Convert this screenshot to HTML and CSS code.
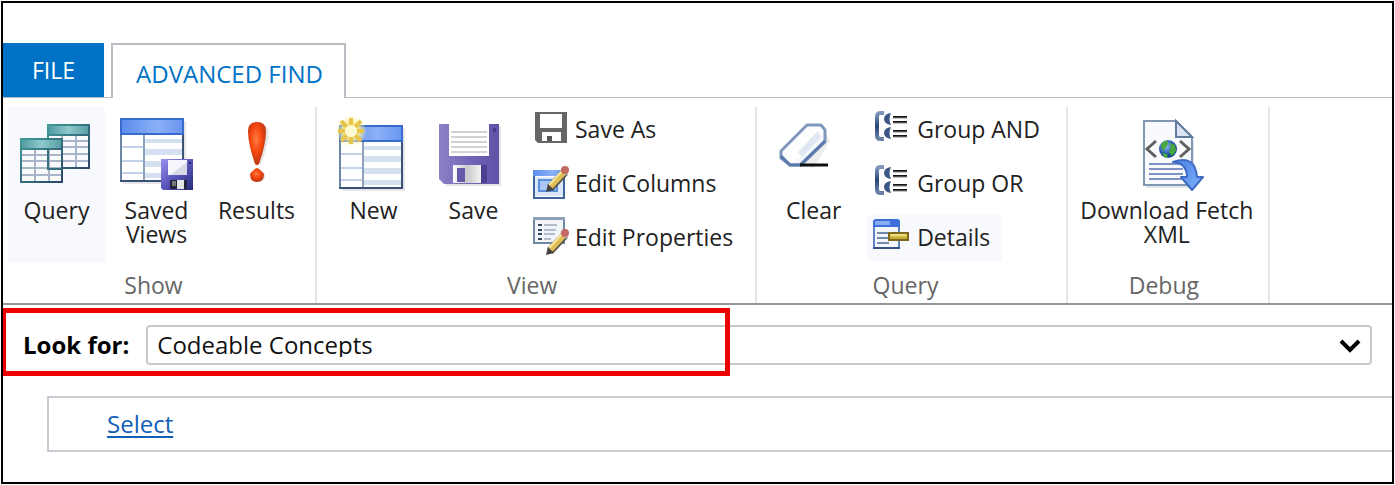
FILE: index.html
```html
<!DOCTYPE html>
<html lang="en">
<head>
<meta charset="utf-8">
<title>Advanced Find</title>
<link rel="stylesheet" href="styles.css">
</head>
<body>
<svg class="defs" aria-hidden="true">
  <defs>
    <linearGradient id="teal" x1="0" x2="1"><stop offset="0" stop-color="#4f9a9f"/><stop offset=".5" stop-color="#8fc9cb"/><stop offset="1" stop-color="#569da4"/></linearGradient>
    <linearGradient id="blue" x1="0" x2="1"><stop offset="0" stop-color="#5a8cee"/><stop offset=".6" stop-color="#8cb0f7"/><stop offset="1" stop-color="#6895f0"/></linearGradient>
    <linearGradient id="edge" x1="0" y1="0" x2="1" y2="1"><stop offset="0" stop-color="#3f9a98"/><stop offset="1" stop-color="#2c4668"/></linearGradient>
    <linearGradient id="violet" x1="0" x2="1" y2="1"><stop offset="0" stop-color="#9a92f0"/><stop offset=".5" stop-color="#5a55bb"/><stop offset="1" stop-color="#252b78"/></linearGradient>
    <linearGradient id="purple" x1="0" x2="1"><stop offset="0" stop-color="#8c80c6"/><stop offset=".5" stop-color="#7565b8"/><stop offset="1" stop-color="#6151a6"/></linearGradient>
    <radialGradient id="red" cx=".45" cy=".4"><stop offset="0" stop-color="#ff7a45"/><stop offset=".6" stop-color="#f5480f"/><stop offset="1" stop-color="#c93a12"/></radialGradient>
    <linearGradient id="metal" x1="0" x2="1"><stop offset="0" stop-color="#fff"/><stop offset=".5" stop-color="#c9c9cd"/><stop offset="1" stop-color="#f2f2f2"/></linearGradient>
    <linearGradient id="rubber" x1="0" y1="0" x2="1" y2="1"><stop offset="0" stop-color="#f4f7fb"/><stop offset=".55" stop-color="#fff"/><stop offset="1" stop-color="#cfdcf0"/></linearGradient>
    <linearGradient id="slate" x1="0" y1="0" x2="0" y2="1"><stop offset="0" stop-color="#8099bd"/><stop offset=".5" stop-color="#2c4674"/><stop offset="1" stop-color="#6c83aa"/></linearGradient>
    <linearGradient id="gold" x1="0" y1="0" x2="0" y2="1"><stop offset="0" stop-color="#f2df72"/><stop offset="1" stop-color="#b79a1c"/></linearGradient>
    <linearGradient id="arrow" x1="0" x2="1" y2="1"><stop offset="0" stop-color="#4c7fe0"/><stop offset="1" stop-color="#7fb0ff"/></linearGradient>
    <radialGradient id="ocean" cx=".4" cy=".35"><stop offset="0" stop-color="#8dbdf2"/><stop offset="1" stop-color="#174a9c"/></radialGradient>
    <radialGradient id="glow"><stop offset="0" stop-color="#fffde0"/><stop offset=".5" stop-color="#fbec85" stop-opacity=".9"/><stop offset="1" stop-color="#fff6b0" stop-opacity="0"/></radialGradient>
    <g id="sheet">
      <path fill="#e6e6ea" d="M3 3h63v63H3z"/>
      <path fill="#fff" d="M1 1h62v62H1z"/>
      <path fill="#d5e0f1" d="M25 21h37v4H25zM25 31h37v6H25zM25 43h37v6H25zM25 55h37v5H25z"/>
      <path stroke="#c3d2e8" stroke-width="2" d="M2 29h22M2 43h22M2 55h22"/>
      <path stroke="#8ea2bd" stroke-width="2" d="M24 17v46"/>
      <path fill="url(#blue)" d="M1 1h62v15H1z"/>
      <path fill="none" stroke="#6e86a6" stroke-width="2" d="M1 16v47"/>
      <path fill="none" stroke="#3b5274" stroke-width="2" d="M0 63h63V16"/>
      <path fill="none" stroke="#386bce" stroke-width="2" d="M1 16V1h62v15z"/>
    </g>
    <g id="grid">
      <path fill="#f8fafc" d="M1 1h41v43H1z"/>
      <path stroke="#a9b5c8" stroke-width="2" d="M2 17h40M2 23h40M2 30h40M2 37h40M15 12v32M29 12v32"/>
      <path fill="url(#teal)" d="M1 1h41v10H1z"/>
      <path fill="none" stroke="url(#edge)" stroke-width="2" d="M1 1h41v43H1zM1 11h41"/>
    </g>
    <g id="pencil">
      <path stroke="#57544c" stroke-width="8" d="M4 23 19 7"/>
      <path stroke="#dfbf55" stroke-width="6" d="M4 22 19 6"/>
      <path stroke="#f6e79c" stroke-width="2" d="M3 20 17 5"/>
      <path fill="#444" d="m0 27 2-8 6 6z"/>
      <path stroke="#b8bcc4" stroke-width="8" d="m17 8 2-2"/>
      <path stroke="#c46b61" stroke-width="8" stroke-linecap="round" d="m19 5 0 0"/>
    </g>
    <g id="brackets">
      <path fill="none" stroke="url(#slate)" stroke-width="4" d="M12 4H8Q5 4 5 8v18q0 4 3 4h4"/>
      <path fill="#3c5685" d="M19 4q-7 1-7 6t7 6q-3-6 0-12zM19 18q-7 1-7 6t7 6q-3-6 0-12z"/>
      <path stroke="#151515" stroke-width="2" d="M21 8h14M21 13h14M21 22h14M21 27h14"/>
      <path stroke="#8a8a8a" d="M21 9h14M21 14h14M21 23h14M21 28h14"/>
    </g>
  </defs>
</svg>

<header class="tabs">
  <button class="tab tab-file" type="button">FILE</button>
  <button class="tab tab-current" type="button">ADVANCED FIND</button>
</header>

<div class="ribbon">
  <section class="group group-show">
    <div class="tools">
      <button class="large selected" type="button">
        <svg viewBox="0 0 80 80"><use href="#grid" x="30" y="9"/><use href="#grid" x="3" y="23"/><path fill="none" stroke="#35717c" stroke-width="2" d="M31 33v21h14"/></svg>
        Query</button>
      <button class="large" type="button">
        <svg viewBox="0 0 80 80"><use href="#sheet" x="3" y="3"/>
          <path fill="url(#violet)" d="M44 44h32v31H46l-2-2z"/><path fill="#f6f6fc" d="M51 45h19v15H51z"/><path fill="#d7d9e6" d="m70 47-17 13h17z"/><path fill="#23233c" d="M53 65h17v9H53z"/><path fill="#e5e5e5" d="M60 65h7v9h-7z"/><path fill="#777" d="M55 66h4v5h-4z"/><path fill="#25226b" d="M72 47h2v2h-2z"/></svg>
        Saved Views</button>
      <button class="large" type="button">
        <svg viewBox="0 0 80 80"><path fill="#e4e4e4" d="M32 11q10-7 19 2 3 9-7 36h-4z"/><path fill="url(#red)" d="M31 16q0-9 9-9t9 9q0 13-7 33-2 2-4 0-7-20-7-33z"/><ellipse cx="41" cy="61" rx="7" ry="6" fill="#ddd"/><path fill="url(#red)" d="M40 53q2 0 7 6 0 8-7 8t-7-8q5-6 7-6z"/></svg>
        Results</button>
    </div>
    <h2 class="caption">Show</h2>
  </section>

  <section class="group">
    <div class="tools">
      <button class="large" type="button">
        <svg viewBox="0 0 80 80"><use href="#sheet" x="5" y="10"/><circle cx="17" cy="16" r="16" fill="url(#glow)"/><path stroke="#e8c54a" stroke-width="4" d="M17 3v7M17 22v7M4 16h7M23 16h7M7 6l6 6M27 6l-6 6M7 26l6-6M27 26l-6-6"/><circle cx="17" cy="16" r="6" fill="#fffbd0"/></svg>
        New</button>
      <button class="large" type="button">
        <svg viewBox="0 0 80 80"><path fill="#e4e3e9" d="M9 11h58v60H12z"/><path fill="url(#purple)" d="M5 9h60v60H10l-5-5z"/><path fill="#fff" d="M15 9h40v32H15z"/><path stroke="#d2d2d6" stroke-width="2" d="M17 17h36M17 22h36M17 27h36M17 32h36M17 37h36"/><path fill="#4d3f91" d="M19 50h34v18H19z"/><path fill="url(#metal)" d="M19 50h28v18H19z"/><path fill="#6757a9" d="M23 53h8v14h-8z"/><path fill="#493c87" d="M59 13h3v4h-3z"/></svg>
        Save</button>
      <div class="stack">
        <button class="small" type="button">
          <svg viewBox="0 0 40 40"><path fill="#666" d="M5 3h32v31H8l-3-3z"/><path fill="#fff" d="M10 5h22v14H10zM12 23h19v9H12z"/><path fill="#555" d="M17 27h5v5h-5z"/></svg>
          Save As</button>
        <button class="small" type="button">
          <svg viewBox="0 0 40 40"><path fill="#fff" stroke="#3e659e" stroke-width="2" d="M4 8h30v27H4z"/><path fill="url(#blue)" d="M3 7h32v6H3z"/><path fill="#dbe8fb" d="M5 14h28v19H5z"/><path fill="#aac8f5" stroke="#5b8edb" stroke-width="2" d="M9 17h18v11H9z"/><use href="#pencil" x="16" y="2"/></svg>
          Edit Columns</button>
        <button class="small" type="button">
          <svg viewBox="0 0 40 40"><path fill="#f1f5fa" stroke="#7288a4" stroke-width="2" d="M4 1h30v25H4z"/><path fill="#8da0b9" d="M3 0h32v3H3z"/><path stroke="#33445d" stroke-width="2" d="M8 8h4M8 13h4M8 17h4M8 22h4"/><path stroke="#b2bdcc" stroke-width="2" d="M14 8h13M14 13h12M14 17h11M14 22h7"/><use href="#pencil" x="16" y="11"/></svg>
          Edit Properties</button>
      </div>
    </div>
    <h2 class="caption">View</h2>
  </section>

  <section class="group group-query">
    <div class="tools">
      <button class="large" type="button">
        <svg viewBox="0 0 80 80"><path fill="#eceef0" d="m20 51 20 2 16-27-5-10z"/><path fill="url(#rubber)" stroke="#7e98bd" stroke-width="3" stroke-linejoin="round" d="M7 36 33 10h14l4 5v12L27 50H16l-9-7z"/><path fill="#dfe7f3" d="m24 37 20-21 3 6-19 20z"/><path fill="none" stroke="#597aaa" stroke-width="3" d="m7 41 9 9h10l25-24"/><path stroke="#111" stroke-width="3" d="M26 50h28"/></svg>
        Clear</button>
      <div class="stack">
        <button class="small" type="button"><svg viewBox="0 0 40 40"><use href="#brackets"/></svg>
          Group AND</button>
        <button class="small" type="button"><svg viewBox="0 0 40 40"><use href="#brackets"/></svg>
          Group OR</button>
        <button class="small selected" type="button">
          <svg viewBox="0 0 40 40"><path fill="#f2f6fd" stroke="#6084c0" stroke-width="2" d="M2 5h25v26H2z"/><path fill="#3d70d8" d="M1 10V5q0-3 3-3h21q3 0 3 3v5z"/><path fill="#87adf8" d="M3 4h15v4H3z"/><path stroke="#7388ab" stroke-width="2" d="M5 16h12M5 21h12M5 26h12"/><path stroke="#355383" stroke-width="2" d="M1 31h27"/><path fill="url(#gold)" stroke="#7c691e" stroke-width="2" d="M17 16h19v7H17z"/><path stroke="#fff3a5" d="M19 18h15"/></svg>
          Details</button>
      </div>
    </div>
    <h2 class="caption">Query</h2>
  </section>

  <section class="group">
    <div class="tools">
      <button class="large wide" type="button">
        <svg viewBox="0 0 80 80"><path fill="#e4e5e9" d="M19 9h32l16 17v47H19z"/><path fill="#f8fafd" stroke="#8096b4" stroke-width="2" d="M17 6h32l16 16v48H17z"/><path fill="#dce6f3" stroke="#627c9e" stroke-width="2" d="M49 6v16h16z"/><path fill="none" stroke="#606060" stroke-width="3" d="m29 26-9 8 9 8M53 26l9 8-9 8"/><circle cx="41" cy="34" r="9" fill="url(#ocean)"/><path fill="#48a83b" d="M34 30q3-5 7-4l-1 5-4 5zM43 28l5 2 1 6-4 5-3-4 2-4zM35 38l5 1 1 4q-4 0-6-5z"/><path stroke="#8094c5" stroke-width="2" d="M22 49h34M22 54h34M22 59h34M22 64h34"/><path fill="url(#arrow)" stroke="#3e6cc4" stroke-width="2" stroke-linejoin="round" d="M46 47q22-8 24 15h6L65 75 54 62h6q0-14-14-15z"/></svg>
        Download Fetch XML</button>
    </div>
    <h2 class="caption">Debug</h2>
  </section>
</div>

<main>
  <div class="lookup">
    <div class="highlight"></div>
    <label for="entity">Look for:</label>
    <div class="picker">
      <select id="entity"><option>Codeable Concepts</option></select>
      <svg class="chevron" viewBox="0 0 22 14" aria-hidden="true"><path fill="none" stroke="#000" stroke-width="4" d="m2 2 9 9 9-9"/></svg>
    </div>
  </div>
  <div class="criteria"><a href="#select">Select</a></div>
</main>
</body>
</html>
```

FILE: styles.css
```css
* {
  box-sizing: border-box;
}

html {
  height: 100%;
  padding: 1px;
  background: #fff;
}

body {
  min-height: 100%;
  margin: 0;
  padding-top: 40px;
  border: 2px solid #000;
  font: 24px/24px "Open Sans", "Noto Sans", sans-serif;
  color: #222;
}

button {
  margin: 0;
  padding: 0;
  border: 0;
  background: none;
  color: inherit;
  font: inherit;
}

.defs {
  position: absolute;
  width: 0;
  height: 0;
}

/* Tab strip */
.tabs {
  display: flex;
  gap: 7px;
  height: 55px;
  border-bottom: 1px solid #b9bdc4;
}

.tab-file {
  padding: 0 29px;
  background: #0072c6;
  color: #fff;
  font-size: 23px;
}

.tab-current {
  margin-bottom: -1px;
  padding: 5px 21px 0 23px;
  border: 2px solid #b9bdc4;
  border-bottom: 0;
  background: #fff;
  color: #0072c6;
}

/* Ribbon */
.ribbon {
  display: flex;
  padding-top: 9px;
  border-bottom: 2px solid #92969d;
  font-size: 23px;
}

.group {
  padding: 0 10px 5px 8px;
  border-right: 2px solid #e5e6e8;
}

.group-show {
  padding-left: 5px;
}

.group-query {
  padding-right: 14px;
}

.group-query .tools {
  gap: 5px;
}

.tools {
  display: flex;
  gap: 3px;
  height: 156px;
}

.caption {
  margin: 10px 6px 0 0;
  padding-bottom: 1px;
  font-size: 23px;
  font-weight: 400;
  text-align: center;
  color: #666;
}

.large {
  display: flex;
  flex-direction: column;
  align-items: center;
  gap: 3px;
  width: 97px;
  padding: 8px 8px 0;
}

.large svg {
  flex: none;
  width: 80px;
  height: 80px;
}

.wide {
  width: 182px;
  padding: 8px 0 0;
}

.stack {
  display: flex;
  flex-direction: column;
  justify-content: space-between;
  align-items: flex-start;
  padding-bottom: 2px;
}

.small {
  display: flex;
  align-items: center;
  gap: 5px;
  height: 46px;
  padding: 0 12px 2px 5px;
  white-space: nowrap;
}

.small svg {
  width: 40px;
  height: 40px;
}

.selected {
  background: #f7f9fc;
}

/* Query criteria */
.lookup {
  position: relative;
  display: flex;
  align-items: center;
  gap: 17px;
  padding: 20px 20px 31px;
}

.lookup label {
  font-weight: 700;
  color: #000;
}

.picker {
  position: relative;
  flex: 1;
}

.picker select {
  display: block;
  width: 100%;
  height: 40px;
  padding: 0 40px 0 9px;
  border: 2px solid #c9c9c9;
  border-radius: 4px;
  appearance: none;
  background: #fff;
  color: #111;
  font: inherit;
}

.chevron {
  position: absolute;
  top: 14px;
  right: 11px;
  width: 22px;
  height: 14px;
  pointer-events: none;
}

.highlight {
  position: absolute;
  z-index: 1;
  top: 3px;
  left: -2px;
  width: 729px;
  height: 68px;
  border: 5px solid #ee0000;
  pointer-events: none;
}

.criteria {
  margin-left: 44px;
  padding: 14px 58px;
  border: 2px solid #c8cdd4;
  border-right: 0;
}

.criteria a {
  color: #1160b7;
  text-underline-offset: 3px;
}
```
